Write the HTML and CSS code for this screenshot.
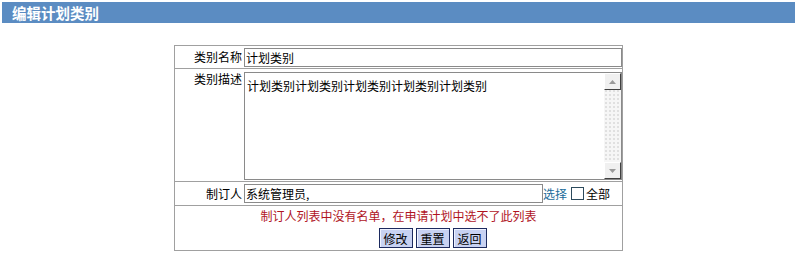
FILE: index.html
```html
<!DOCTYPE html>
<html>
<head>
<meta charset="utf-8">
<link rel="stylesheet" href="styles.css">
</head>
<body>
<div class="titlebar">编辑计划类别</div>
<table class="form">
  <tr class="row-name">
    <th class="label">类别名称</th>
    <td class="field"><input class="text full" type="text" value="计划类别"></td>
  </tr>
  <tr class="row-desc">
    <th class="label top">类别描述</th>
    <td class="field">
      <div class="areabox">
        <div class="areatext">计划类别计划类别计划类别计划类别计划类别</div>
        <div class="scrollbar">
          <div class="sbtn"><svg width="7" height="4" viewBox="0 0 7 4"><path d="M0 4 L3.5 0 L7 4Z" fill="#9a9a9a"/></svg></div>
          <div class="track"></div>
          <div class="sbtn"><svg width="7" height="4" viewBox="0 0 7 4"><path d="M0 0 L3.5 4 L7 0Z" fill="#9a9a9a"/></svg></div>
        </div>
      </div>
    </td>
  </tr>
  <tr class="row-person">
    <th class="label">制订人</th>
    <td class="field person-cell">
      <div class="personline">
        <input class="text person" type="text" value="系统管理员,">
        <a class="pick">选择</a>
        <span class="check"></span>
        <span class="all">全部</span>
      </div>
    </td>
  </tr>
  <tr class="row-msg">
    <td colspan="2"><div class="msg">制订人列表中没有名单，在申请计划中选不了此列表</div></td>
  </tr>
  <tr class="row-btns">
    <td></td>
    <td>
      <div class="buttons">
        <button class="btn">修改</button>
        <button class="btn">重置</button>
        <button class="btn">返回</button>
      </div>
    </td>
  </tr>
</table>
</body>
</html>
```
FILE: styles.css
```css
html, body {
  margin: 0;
  padding: 0;
  background: #ffffff;
  font-family: "Noto Sans CJK SC", "DejaVu Sans", sans-serif;
  font-size: 12px;
  color: #000;
}
body {
  padding: 2px 2px 0 2px;
}
.titlebar {
  height: 21px;
  line-height: 21px;
  background: #5b8cc2;
  color: #ffffff;
  font-weight: bold;
  font-size: 14.5px;
  padding-left: 10px;
}
.form {
  margin: 22px auto 0;
  width: 449px;
  border-collapse: collapse;
  border: 1px solid #a0a0a0;
}
.form tr {
  border-top: 1px solid #a0a0a0;
}
.form tr.row-btns {
  border-top: none;
}
.form th, .form td {
  padding: 0;
}
.label {
  width: 67px;
  text-align: right;
  font-weight: normal;
  white-space: nowrap;
  padding-right: 1px !important;
  line-height: 14px;
  vertical-align: middle;
}
.label.top {
  vertical-align: top;
  padding-top: 3px !important;
}
.field {
  padding: 2px 0 1px 1px !important;
}
.field.person-cell {
  padding: 2px 0 2px 1px !important;
}
.text {
  box-sizing: border-box;
  height: 19px;
  border: 1px solid #8a8a8a;
  font-family: "Noto Sans CJK SC", sans-serif;
  font-size: 12px;
  padding: 0 1px;
  margin: 0;
  outline: none;
  color: #000;
}
.full { width: 378px; display: block; }
.areabox {
  box-sizing: border-box;
  width: 378px;
  height: 108px;
  border: 1px solid #8a8a8a;
  display: flex;
  margin: 1px 0 0;
}
.areatext {
  flex: 1;
  padding: 5px 2px;
  line-height: 16px;
}
.scrollbar {
  width: 17px;
  display: flex;
  flex-direction: column;
  background-color: #f6f6f6;
  background-image: radial-gradient(circle, #e0e0e0 0.8px, transparent 1px);
  background-size: 4px 4px;
}
.sbtn {
  box-sizing: border-box;
  height: 17px;
  background: #f0f0f0;
  border-top: 1px solid #ffffff;
  border-left: 1px solid #ffffff;
  border-right: 1px solid #404040;
  border-bottom: 1px solid #404040;
  display: flex;
  align-items: center;
  justify-content: center;
}
.track { flex: 1; }
.personline {
  display: flex;
  align-items: center;
}
.person { width: 299px; }
.pick {
  color: #1a6b9a;
  cursor: pointer;
}
.check {
  box-sizing: border-box;
  width: 13px;
  height: 13px;
  border: 1px solid #2c4a5c;
  background: #fff;
  margin-left: 4px;
  margin-right: 2px;
}
.row-msg td {
  text-align: center;
}
.msg {
  color: #b0141e;
  line-height: 18px;
  padding-top: 1px;
}
.buttons {
  display: flex;
  justify-content: center;
  gap: 3px;
  margin-top: 3px;
  padding-bottom: 2px;
}
.btn {
  box-sizing: border-box;
  width: 34px;
  height: 20px;
  padding: 0;
  background: #c8d2f2;
  border: 1px solid #1c2a5e;
  box-shadow: inset 1px 1px 0 #eef2ff;
  font-family: "Noto Sans CJK SC", sans-serif;
  font-size: 12px;
  color: #000;
}
```
